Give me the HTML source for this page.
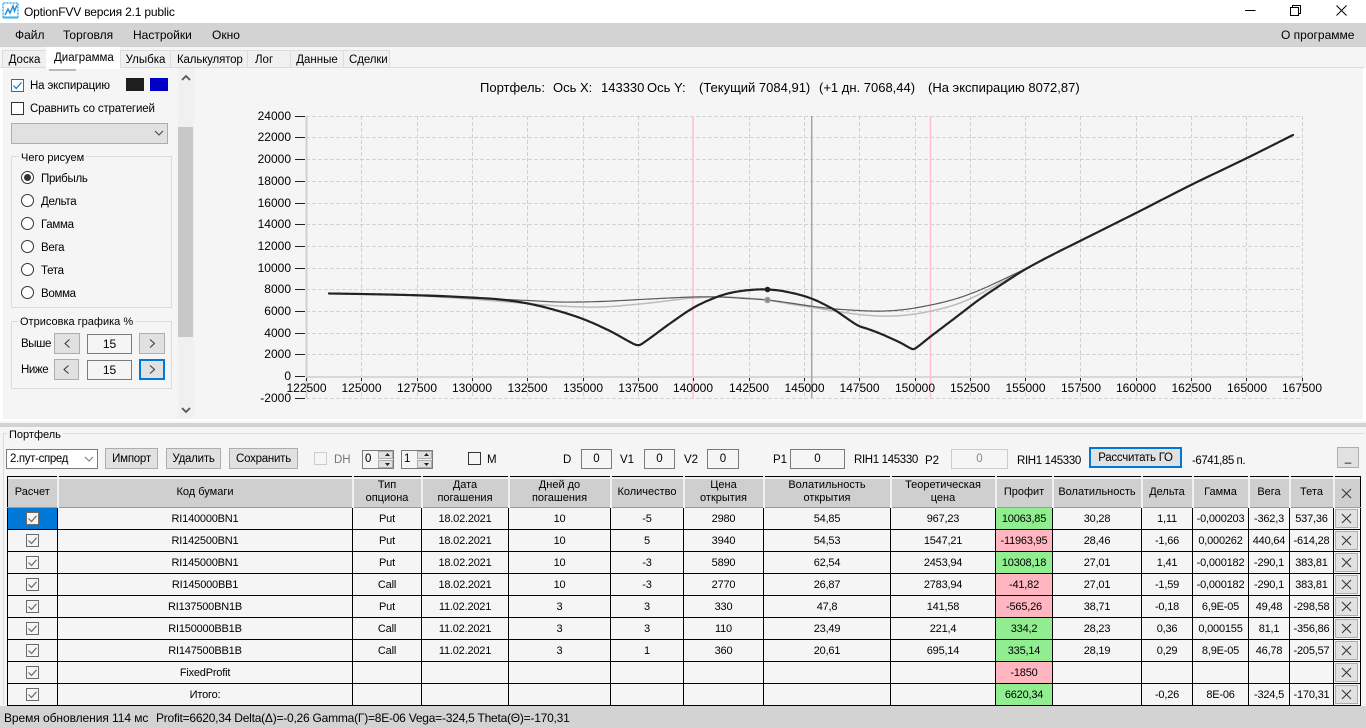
<!DOCTYPE html>
<html lang="ru"><head><meta charset="utf-8"><title>OptionFVV</title>
<style>
html,body{margin:0;padding:0;width:1366px;height:728px;overflow:hidden;background:#f5f5f5;font-family:"Liberation Sans",sans-serif;font-size:12px;color:#000}
.a{position:absolute;white-space:nowrap}
.btn{position:absolute;background:#e1e1e1;border:1px solid #adadad;box-sizing:border-box;text-align:center;font-size:11.5px;white-space:nowrap;letter-spacing:-.25px}
.inp{position:absolute;border:1px solid #7a7a7a;box-sizing:border-box;text-align:center;background:#f5f5f5;font-size:11.5px}
.tab{position:absolute;top:50px;height:18px;line-height:18px;background:#f0f0f0;border:1px solid #dcdcdc;border-bottom:0;box-sizing:border-box;text-align:center;font-size:11.5px}
.radio{position:absolute;left:21px;width:13px;height:13px;border:1px solid #333;border-radius:50%;box-sizing:border-box;background:#fff}
.rt{position:absolute;left:41px;font-size:11.5px;white-space:nowrap;line-height:14px;letter-spacing:-.3px}
.l{position:absolute;white-space:nowrap;top:453px;line-height:14px;font-size:11.5px}
table{position:absolute;left:7px;top:476px;width:1353px;border-collapse:collapse;table-layout:fixed;font-size:11px;line-height:13px;background:#f5f5f5}
td{border:1px solid #000;height:21px;padding:2px 0 0;text-align:center;box-sizing:border-box;overflow:hidden;white-space:nowrap;letter-spacing:-.2px}
td:first-child,td:last-child{padding-top:0}
th{height:31px;padding:0;font-weight:normal;background:#cfcfcf;border:1px solid #000;border-bottom:1px solid #9a9a9a;border-left:2px solid #f0f0f0;border-right:0;box-shadow:inset 0 2px 0 #f0f0f0;box-sizing:border-box;white-space:nowrap}
th:first-child{border-left:1px solid #000}
th:last-child{border-right:1px solid #000}
tr{height:22px}
.g{background:#90ee90}.p{background:#ffb6c1}
.sel{background:#0078d7}
.cb{width:13px;height:13px;display:block;margin:0 auto}
.xb{display:block;margin:0 2px 0 1px;height:19px;background:#e1e1e1;border:1px solid #adadad;box-sizing:border-box}
.xb svg{display:block;margin:3px auto 0}
.xh svg{display:block;margin:3px auto 0 6px}
.sp{position:absolute;top:450px;width:32px;height:19px;border:1px solid #7a7a7a;box-sizing:border-box;background:#f5f5f5;padding-left:2px;line-height:17px;font-size:11.5px}
.sp i{position:absolute;right:0;width:15px;height:8px;background:#e1e1e1;border:1px solid #adadad;box-sizing:border-box}
.sp i.u{top:0}.sp i.d{bottom:0}
</style></head><body>
<svg width="0" height="0" style="position:absolute"><defs>
<symbol id="ck" viewBox="0 0 13 13"><rect x=".5" y=".5" width="12" height="12" fill="#f5f5f5" stroke="#6a6a6a"/><path d="M2.5 6.5 5.5 9.5 10.5 3.8" fill="none" stroke="#6a6a6a" stroke-width="1.2"/></symbol>
<symbol id="x" viewBox="0 0 11 11"><path d="M1 1 10 10M10 1 1 10" stroke="#333" stroke-width="1" fill="none"/></symbol>
</defs></svg>

<!-- title bar -->
<div class="a" style="left:0;top:0;width:1366px;height:23px;background:#fff"></div>
<svg class="a" style="left:2px;top:2px" width="17" height="17" viewBox="0 0 17 17"><path d="M1 15.500V1H16V15.500" fill="none" stroke="#36b4ee" stroke-width="1.500" stroke-dasharray="2 1"/><path d="M1 15.500H16" stroke="#36b4ee" stroke-width="2"/><path d="M3 13 6 7 8 11 11 4 12.500 9 15 3" fill="none" stroke="#2a8fd8" stroke-width="1.500"/></svg>
<div class="a" style="left:24px;top:5px;font-size:12px;letter-spacing:-.18px;line-height:14px">OptionFVV версия 2.1 public</div>
<svg class="a" style="left:1240px;top:0" width="120" height="22"><path d="M5 10.500H15.500" stroke="#000"/><path d="M50.500 7.500H58.500V15.500H50.500ZM52.500 7.500V5.500H60.500V13.500H58.500" fill="none" stroke="#000"/><path d="M96.500 5.500 106.500 15.500M106.500 5.500 96.500 15.500" stroke="#000"/></svg>

<!-- menu -->
<div class="a" style="left:0;top:23px;width:1366px;height:24px;background:#d3d3d3"></div>
<div class="a" style="left:15px;top:28px;line-height:14px">Файл</div>
<div class="a" style="left:63px;top:28px;line-height:14px">Торговля</div>
<div class="a" style="left:133px;top:28px;line-height:14px">Настройки</div>
<div class="a" style="left:212px;top:28px;line-height:14px">Окно</div>
<div class="a" style="left:1281px;top:28px;line-height:14px">О программе</div>

<!-- tabs -->
<div class="tab" style="left:2px;width:45px">Доска</div>
<div class="tab" style="left:120px;width:51px">Улыбка</div>
<div class="tab" style="left:170px;width:78px;text-align:left;padding-left:6px;letter-spacing:-.15px">Калькулятор</div>
<div class="tab" style="left:247px;width:44px;text-align:left;padding-left:7px">Лог</div>
<div class="tab" style="left:290px;width:54px">Данные</div>
<div class="tab" style="left:343px;width:47px;text-align:left;padding-left:5px;letter-spacing:-.1px">Сделки</div>
<div class="a" style="left:0;top:67px;width:1364px;height:1px;background:#dcdcdc"></div>
<div class="a" style="left:46px;top:47px;width:74px;height:22px;background:#fff;text-align:left;padding-left:8px;box-sizing:border-box;line-height:22px;font-size:11.5px;z-index:2">Диаграмма</div>
<div class="a" style="left:49px;top:69px;width:27px;height:2px;background:#b8b8b8;z-index:2"></div>

<!-- panel frame -->
<div class="a" style="left:0;top:68px;width:3px;height:352px;background:#fff"></div>
<div class="a" style="left:0;top:419px;width:1366px;height:2px;background:#fff"></div>
<div class="a" style="left:0;top:423px;width:1366px;height:4px;background:#d3d3d3"></div>
<div class="a" style="left:1363px;top:68px;width:3px;height:352px;background:#fff"></div>

<!-- left panel -->
<svg class="a" style="left:11px;top:79px" width="13" height="13"><rect x=".5" y=".5" width="12" height="12" fill="#fff" stroke="#0078d7"/><path d="M2.500 6.500 5.200 9.500 10.500 3.500" fill="none" stroke="#0078d7" stroke-width="1.200"/></svg>
<div class="a" style="left:30px;top:79px;line-height:14px;font-size:11.5px;letter-spacing:-.15px">На экспирацию</div>
<div class="a" style="left:126px;top:78px;width:18px;height:13px;background:#1e1e1e"></div>
<div class="a" style="left:150px;top:78px;width:18px;height:13px;background:#0000c8"></div>
<div class="a" style="left:11px;top:102px;width:13px;height:13px;box-sizing:border-box;border:1px solid #333;background:#fff"></div>
<div class="a" style="left:30px;top:102px;line-height:14px;font-size:11.5px;letter-spacing:-.17px">Сравнить со стратегией</div>
<div class="a" style="left:11px;top:123px;width:157px;height:21px;box-sizing:border-box;background:#e1e1e1;border:1px solid #adadad"></div>
<svg class="a" style="left:154px;top:130px" width="10" height="7"><path d="M1 1 5 5 9 1" fill="none" stroke="#444" stroke-width="1.100"/></svg>

<div class="a" style="left:11px;top:156px;width:161px;height:152px;box-sizing:border-box;border:1px solid #dcdcdc"></div>
<div class="a" style="left:19px;top:151px;background:#f5f5f5;padding:0 2px;line-height:14px;font-size:11px">Чего рисуем</div>
<div class="radio" style="top:171px"></div><div class="a" style="left:24px;top:174px;width:7px;height:7px;border-radius:50%;background:#333"></div>
<div class="rt" style="top:172px">Прибыль</div>
<div class="radio" style="top:194px"></div><div class="rt" style="top:195px">Дельта</div>
<div class="radio" style="top:217px"></div><div class="rt" style="top:218px">Гамма</div>
<div class="radio" style="top:240px"></div><div class="rt" style="top:241px">Вега</div>
<div class="radio" style="top:263px"></div><div class="rt" style="top:264px">Тета</div>
<div class="radio" style="top:286px"></div><div class="rt" style="top:287px">Вомма</div>

<div class="a" style="left:11px;top:321px;width:161px;height:68px;box-sizing:border-box;border:1px solid #dcdcdc"></div>
<div class="a" style="left:18px;top:315px;background:#f5f5f5;padding:0 2px;line-height:14px;font-size:11px">Отрисовка графика %</div>
<div class="a" style="left:21px;top:337px;line-height:14px;font-size:11.5px;letter-spacing:-.4px">Выше</div>
<div class="a" style="left:21px;top:363px;line-height:14px;font-size:11.5px;letter-spacing:-.4px">Ниже</div>
<div class="btn" style="left:54px;top:333px;width:26px;height:21px"></div>
<div class="inp" style="left:87px;top:334px;width:45px;height:20px;line-height:18px;font-size:12px">15</div>
<div class="btn" style="left:139px;top:333px;width:26px;height:21px"></div>
<div class="btn" style="left:54px;top:359px;width:25px;height:21px"></div>
<div class="inp" style="left:87px;top:360px;width:45px;height:20px;line-height:18px;font-size:12px">15</div>
<div class="btn" style="left:139px;top:359px;width:26px;height:21px;border:2px solid #0078d7"></div>
<svg class="a" style="left:0;top:0" width="200" height="420"><g fill="none" stroke="#333"><path d="M69.500 339.500 65 343.500 69.500 347.500M150 339.500 154.500 343.500 150 347.500M68.500 365.500 64 369.500 68.500 373.500M150 365.500 154.500 369.500 150 373.500"/></g></svg>

<!-- scrollbar -->
<div class="a" style="left:178px;top:68px;width:16px;height:350px;background:#f0f0f0"></div>
<div class="a" style="left:178px;top:127px;width:15px;height:210px;background:#c8c8c8"></div>
<svg class="a" style="left:178px;top:68px" width="16" height="350"><path d="M4 12 8 8 12 12M4 340 8 344 12 340" fill="none" stroke="#555" stroke-width="1.800"/></svg>

<!-- chart -->
<svg class="a" style="left:0;top:0" width="1366" height="428" font-family="'Liberation Sans',sans-serif" font-size="12">
<g font-size="13"><text x="480" y="92">Портфель:</text><text x="553" y="92">Ось X:</text><text x="601" y="92">143330</text><text x="647" y="92">Ось Y:</text><text x="699" y="92">(Текущий 7084,91)</text><text x="819" y="92">(+1 дн. 7068,44)</text><text x="928" y="92">(На экспирацию 8072,87)</text></g>
<g stroke="#d2d2d2" stroke-dasharray="4 2" fill="none">
<path d="M306 116.500H1302M306 137.500H1302M306 159.500H1302M306 181.500H1302M306 203.500H1302M306 224.500H1302M306 246.500H1302M306 268.500H1302M306 289.500H1302M306 311.500H1302M306 333.500H1302M306 354.500H1302M306 398.500H1302"/>
<path d="M361.500 116V398M417.500 116V398M472.500 116V398M527.500 116V398M583.500 116V398M638.500 116V398M749.500 116V398M804.500 116V398M859.500 116V398M915.500 116V398M970.500 116V398M1025.500 116V398M1080.500 116V398M1136.500 116V398M1191.500 116V398M1246.500 116V398M1302.500 116V398"/>
</g>
<path d="M306 377H1302" stroke="#d8d8d8" stroke-width="2"/>
<path d="M306.500 116V398" stroke="#d0d0d0" stroke-width="2"/>
<path d="M693 116V398M930.500 116V398" stroke="#ffc0cb" stroke-width="1.500"/>
<path d="M811.700 116V398" stroke="#a4a4ac" stroke-width="1.500"/>
<path d="M295 116.500H305M295 137.500H305M295 159.500H305M295 181.500H305M295 203.500H305M295 224.500H305M295 246.500H305M295 268.500H305M295 289.500H305M295 311.500H305M295 333.500H305M295 354.500H305M295 376.500H305M295 398.500H305" stroke="#222"/>
<path d="M306.500 378V381M361.500 378V381M417.500 378V381M472.500 378V381M527.500 378V381M583.500 378V381M638.500 378V381M693.500 378V381M749.500 378V381M804.500 378V381M859.500 378V381M915.500 378V381M970.500 378V381M1025.500 378V381M1080.500 378V381M1136.500 378V381M1191.500 378V381M1246.500 378V381M1302.500 378V381" stroke="#222"/>
<g text-anchor="end">
<text x="291" y="120">24000</text><text x="291" y="141">22000</text><text x="291" y="163">20000</text><text x="291" y="185">18000</text><text x="291" y="207">16000</text><text x="291" y="228">14000</text><text x="291" y="250">12000</text><text x="291" y="272">10000</text><text x="291" y="293">8000</text><text x="291" y="315">6000</text><text x="291" y="337">4000</text><text x="291" y="358">2000</text><text x="291" y="380">0</text><text x="291" y="402">-2000</text>
</g>
<g text-anchor="middle">
<text x="306.500" y="392">122500</text><text x="361.500" y="392">125000</text><text x="417" y="392">127500</text><text x="472" y="392">130000</text><text x="527.500" y="392">132500</text><text x="583" y="392">135000</text><text x="638.300" y="392">137500</text><text x="693" y="392">140000</text><text x="749" y="392">142500</text><text x="804.500" y="392">145000</text><text x="859.500" y="392">147500</text><text x="915" y="392">150000</text><text x="970" y="392">152500</text><text x="1025.500" y="392">155000</text><text x="1081" y="392">157500</text><text x="1136" y="392">160000</text><text x="1191.500" y="392">162500</text><text x="1247" y="392">165000</text><text x="1302" y="392">167500</text>
</g>
<polyline class="c" fill="none" stroke="#bcbcbc" stroke-width="1.500" points="329,293.500 400,295 470,299 520,303 560,306 600,307 640,304 670,300.500 693,298 720,297 745,298 767,300 790,304 810,307 840,312 870,315.500 893,316 915,314 940,309 960,303 980,294 1003,281.500 1025,269.500 1050,256"/>
<polyline class="c" fill="none" stroke="#5a5a5a" stroke-width="1.200" points="329,293.500 400,295 470,298 528,300.500 560,302 600,301.500 650,299 693,297 720,297 745,298.500 767,300 790,303 810,306 830,308.500 850,310 870,311 885,311 900,310 915,308 940,303 960,297.500 980,290 1003,279.500 1025,269 1050,256"/>
<polyline class="c" fill="none" stroke="#222" stroke-width="2.200" stroke-linejoin="round" stroke-linecap="round" points="329,293.500 360,294 400,294.800 440,296 470,297.500 500,299.500 528,303.500 555,310 583,319 610,331 630,342 636,344.800 640,344.800 646,341 655,334.500 670,323.500 693,308 713,298.500 730,293 750,290 767,289.500 785,291.500 810,298 833,309 845,317 858,325.500 868,329 880,333.500 900,342.500 911,348.500 914,349 918,346.500 930,337 955,318 980,299 1003,283.500 1025,269.500 1050,256 1080,241 1136,213 1191,185 1247,158 1293,135"/>
<circle cx="767.500" cy="300" r="2.800" fill="#8a8a8a" stroke="#a8a8a8"/>
<circle cx="767.500" cy="289.500" r="2.800" fill="#1e1e1e"/>
</svg>
<script>
document.querySelectorAll('polyline.c').forEach(function(e){
var p=e.getAttribute('points').trim().split(/\s+/).map(function(s){return s.split(',').map(Number)}),o=[];
for(var i=0;i<p.length-1;i++){var a=p[Math.max(i-1,0)],b=p[i],c=p[i+1],d=p[Math.min(i+2,p.length-1)];
var h=c[0]-b[0],m0=(c[1]-a[1])/((c[0]-a[0])||1),m1=(d[1]-b[1])/((d[0]-b[0])||1);
for(var k=0;k<12;k++){var t=k/12,t2=t*t,t3=t2*t;
o.push((b[0]+h*t).toFixed(2)+','+((2*t3-3*t2+1)*b[1]+(t3-2*t2+t)*h*m0+(-2*t3+3*t2)*c[1]+(t3-t2)*h*m1).toFixed(2));}}
o.push(p[p.length-1].join(','));e.setAttribute('points',o.join(' '));});
</script>

<!-- portfolio group -->
<div class="a" style="left:3px;top:433px;width:1361px;height:1px;background:#dcdcdc"></div>
<div class="a" style="left:3px;top:433px;width:1px;height:272px;background:#dcdcdc"></div>
<div class="a" style="left:7px;top:428px;background:#f5f5f5;padding:0 2px;line-height:14px;font-size:11px">Портфель</div>

<div class="a" style="left:6px;top:449px;width:92px;height:20px;box-sizing:border-box;background:#fff;border:1px solid #7a7a7a;line-height:19px;padding-left:3px;font-size:11.5px;letter-spacing:-.35px">2.пут-спред</div>
<svg class="a" style="left:84px;top:456px" width="10" height="6"><path d="M1 1 5 5 9 1" fill="none" stroke="#777"/></svg>
<div class="btn" style="left:105px;top:448px;width:53px;height:21px;line-height:21px">Импорт</div>
<div class="btn" style="left:166px;top:448px;width:55px;height:21px;line-height:21px">Удалить</div>
<div class="btn" style="left:229px;top:448px;width:69px;height:21px;line-height:21px">Сохранить</div>
<div class="a" style="left:314px;top:452px;width:13px;height:13px;box-sizing:border-box;border:1px solid #ccc;background:#f5f5f5"></div>
<div class="l" style="left:334px;color:#777">DH</div>
<div class="sp" style="left:362px">0<i class="u"></i><i class="d"></i></div>
<div class="sp" style="left:401px">1<i class="u"></i><i class="d"></i></div>
<svg class="a" style="left:362px;top:450px" width="72" height="19"><path d="M23 6 25.500 3 28 6ZM23 13 25.500 16 28 13ZM62 6 64.500 3 67 6ZM62 13 64.500 16 67 13Z" fill="#222"/></svg>
<div class="a" style="left:468px;top:452px;width:13px;height:13px;box-sizing:border-box;border:1px solid #333;background:#f5f5f5"></div>
<div class="l" style="left:487px">M</div>
<div class="l" style="left:563px">D</div>
<div class="inp" style="left:581px;top:449px;width:31px;height:20px;line-height:19px">0</div>
<div class="l" style="left:620px">V1</div>
<div class="inp" style="left:644px;top:449px;width:31px;height:20px;line-height:19px">0</div>
<div class="l" style="left:684px">V2</div>
<div class="inp" style="left:707px;top:449px;width:32px;height:20px;line-height:19px">0</div>
<div class="l" style="left:773px">P1</div>
<div class="inp" style="left:790px;top:449px;width:55px;height:20px;line-height:19px">0</div>
<div class="l" style="left:854px;letter-spacing:-.35px">RIH1 145330</div>
<div class="l" style="left:925px;top:454px">P2</div>
<div class="inp" style="left:951px;top:449px;width:57px;height:20px;line-height:19px;border-color:#ccc;color:#888">0</div>
<div class="l" style="left:1017px;letter-spacing:-.35px;top:454px">RIH1 145330</div>
<div class="btn" style="left:1089px;top:447px;width:93px;height:21px;line-height:19px;border:2px solid #0078d7">Рассчитать ГО</div>
<div class="l" style="left:1192px;top:454px;letter-spacing:-.45px">-6741,85 п.</div>
<div class="btn" style="left:1337px;top:447px;width:22px;height:21px;line-height:20px">_</div>

<!-- table -->
<table>
<colgroup><col style="width:50px"><col style="width:295px"><col style="width:69px"><col style="width:87px"><col style="width:102px"><col style="width:73px"><col style="width:80px"><col style="width:127px"><col style="width:105px"><col style="width:57px"><col style="width:89px"><col style="width:51px"><col style="width:56px"><col style="width:41px"><col style="width:44px"><col style="width:27px"></colgroup>
<tr style="height:31px"><th>Расчет</th><th>Код бумаги</th><th>Тип<br>опциона</th><th>Дата<br>погашения</th><th>Дней до<br>погашения</th><th>Количество</th><th>Цена<br>открытия</th><th>Волатильность<br>открытия</th><th>Теоретическая<br>цена</th><th>Профит</th><th>Волатильность</th><th>Дельта</th><th>Гамма</th><th>Вега</th><th>Тета</th><th class="xh"><svg width="11" height="11"><use href="#x"/></svg></th></tr>
<tr><td class="sel"><svg class="cb"><use href="#ck"/></svg></td><td>RI140000BN1</td><td>Put</td><td>18.02.2021</td><td>10</td><td>-5</td><td>2980</td><td>54,85</td><td>967,23</td><td class="g">10063,85</td><td>30,28</td><td>1,11</td><td>-0,000203</td><td>-362,3</td><td>537,36</td><td><span class="xb"><svg width="11" height="11"><use href="#x"/></svg></span></td></tr>
<tr><td><svg class="cb"><use href="#ck"/></svg></td><td>RI142500BN1</td><td>Put</td><td>18.02.2021</td><td>10</td><td>5</td><td>3940</td><td>54,53</td><td>1547,21</td><td class="p">-11963,95</td><td>28,46</td><td>-1,66</td><td>0,000262</td><td>440,64</td><td>-614,28</td><td><span class="xb"><svg width="11" height="11"><use href="#x"/></svg></span></td></tr>
<tr><td><svg class="cb"><use href="#ck"/></svg></td><td>RI145000BN1</td><td>Put</td><td>18.02.2021</td><td>10</td><td>-3</td><td>5890</td><td>62,54</td><td>2453,94</td><td class="g">10308,18</td><td>27,01</td><td>1,41</td><td>-0,000182</td><td>-290,1</td><td>383,81</td><td><span class="xb"><svg width="11" height="11"><use href="#x"/></svg></span></td></tr>
<tr><td><svg class="cb"><use href="#ck"/></svg></td><td>RI145000BB1</td><td>Call</td><td>18.02.2021</td><td>10</td><td>-3</td><td>2770</td><td>26,87</td><td>2783,94</td><td class="p">-41,82</td><td>27,01</td><td>-1,59</td><td>-0,000182</td><td>-290,1</td><td>383,81</td><td><span class="xb"><svg width="11" height="11"><use href="#x"/></svg></span></td></tr>
<tr><td><svg class="cb"><use href="#ck"/></svg></td><td>RI137500BN1B</td><td>Put</td><td>11.02.2021</td><td>3</td><td>3</td><td>330</td><td>47,8</td><td>141,58</td><td class="p">-565,26</td><td>38,71</td><td>-0,18</td><td>6,9E-05</td><td>49,48</td><td>-298,58</td><td><span class="xb"><svg width="11" height="11"><use href="#x"/></svg></span></td></tr>
<tr><td><svg class="cb"><use href="#ck"/></svg></td><td>RI150000BB1B</td><td>Call</td><td>11.02.2021</td><td>3</td><td>3</td><td>110</td><td>23,49</td><td>221,4</td><td class="g">334,2</td><td>28,23</td><td>0,36</td><td>0,000155</td><td>81,1</td><td>-356,86</td><td><span class="xb"><svg width="11" height="11"><use href="#x"/></svg></span></td></tr>
<tr><td><svg class="cb"><use href="#ck"/></svg></td><td>RI147500BB1B</td><td>Call</td><td>11.02.2021</td><td>3</td><td>1</td><td>360</td><td>20,61</td><td>695,14</td><td class="g">335,14</td><td>28,19</td><td>0,29</td><td>8,9E-05</td><td>46,78</td><td>-205,57</td><td><span class="xb"><svg width="11" height="11"><use href="#x"/></svg></span></td></tr>
<tr><td><svg class="cb"><use href="#ck"/></svg></td><td>FixedProfit</td><td></td><td></td><td></td><td></td><td></td><td></td><td></td><td class="p">-1850</td><td></td><td></td><td></td><td></td><td></td><td><span class="xb"><svg width="11" height="11"><use href="#x"/></svg></span></td></tr>
<tr><td><svg class="cb"><use href="#ck"/></svg></td><td>Итого:</td><td></td><td></td><td></td><td></td><td></td><td></td><td></td><td class="g">6620,34</td><td></td><td>-0,26</td><td>8E-06</td><td>-324,5</td><td>-170,31</td><td><span class="xb"><svg width="11" height="11"><use href="#x"/></svg></span></td></tr>
</table>

<!-- status bar -->
<div class="a" style="left:0;top:706px;width:1366px;height:22px;background:#d3d3d3;z-index:3"></div>
<div class="a" style="left:4px;top:711px;line-height:14px;font-size:12px;z-index:4;letter-spacing:-.07px">Время обновления 114 мс</div>
<div class="a" style="left:156px;top:711px;line-height:14px;font-size:12px;z-index:4;letter-spacing:-.23px">Profit=6620,34 Delta(Δ)=-0,26 Gamma(Γ)=8E-06 Vega=-324,5 Theta(Θ)=-170,31</div>
</body></html>
